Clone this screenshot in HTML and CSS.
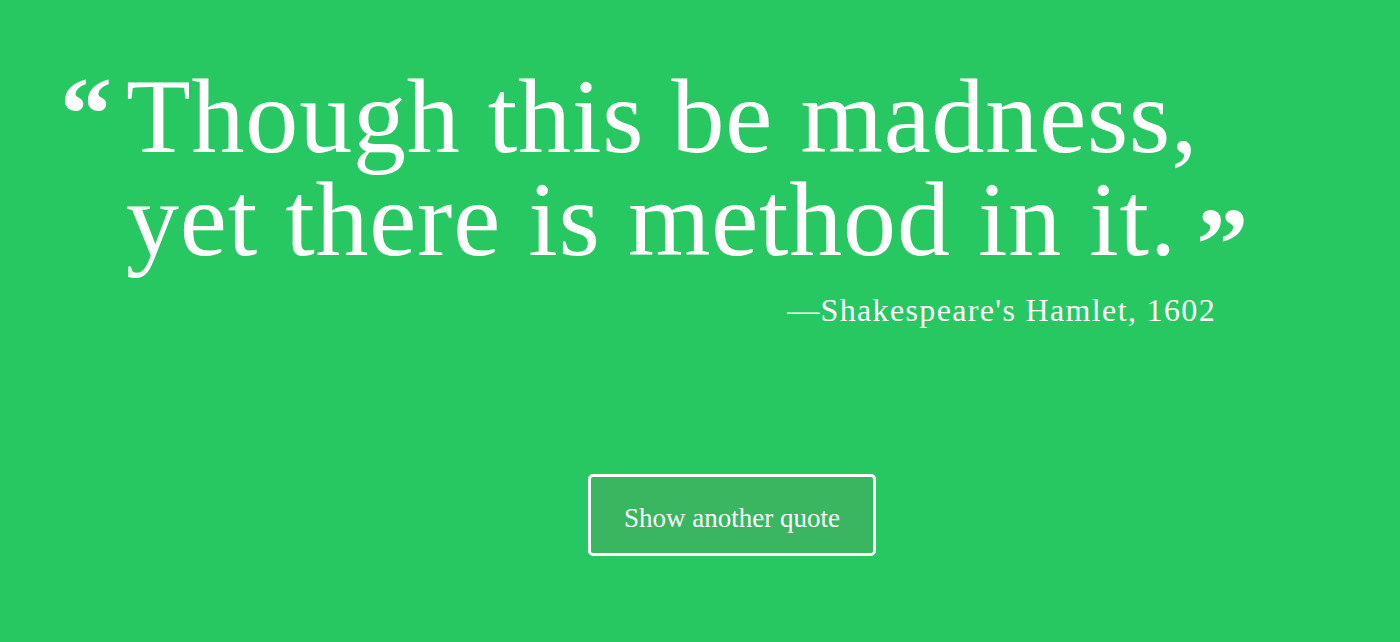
FILE: index.html
```html
<!DOCTYPE html>
<html lang="en">
<head>
<meta charset="utf-8">
<title>Random Quote</title>
<link rel="stylesheet" href="styles.css">
</head>
<body>
<main class="page">
  <section class="quote">
    <div class="quote-row">
      <span class="mark mark-open">“</span>
      <blockquote class="quote-text">Though this be madness, yet there is method in it.<span class="mark mark-close">”</span></blockquote>
    </div>
    <p class="cite">—Shakespeare's Hamlet, 1602</p>
  </section>
  <div class="actions">
    <button class="btn" type="button">Show another quote</button>
  </div>
</main>
</body>
</html>
```

FILE: styles.css
```css
html, body {
  margin: 0;
  padding: 0;
}
body {
  background: #27c862;
  color: #ffffff;
  font-family: "Liberation Serif", "Times New Roman", serif;
  height: 642px;
  overflow: hidden;
}
.page {
  display: flex;
  flex-direction: column;
  padding-top: 65px;
}
.quote-row {
  display: flex;
  align-items: flex-start;
}
.mark {
  font-family: "Liberation Serif", serif;
  font-weight: bold;
  line-height: 1;
}
.mark-open {
  font-size: 104px;
  width: 66px;
  margin-left: 60px;
  margin-top: -3px;
  height: 60px;
}
.mark-close {
  font-size: 104px;
  margin-left: 19px;
  vertical-align: -24px;
  line-height: 0;
  letter-spacing: 0;
}
.quote-text {
  margin: 0;
  width: 1200px;
  font-size: 106px;
  line-height: 103px;
  font-weight: normal;
  letter-spacing: 0.8px;
}
.cite {
  margin: 19px 0 0;
  text-align: right;
  padding-right: 184px;
  font-size: 32px;
  line-height: 40px;
  letter-spacing: 1.35px;
}
.actions {
  display: flex;
  justify-content: center;
  padding-left: 64px;
  margin-top: 144px;
}
.btn {
  background: #3ab660;
  color: #ffffff;
  border: 3px solid #ffffff;
  border-radius: 5px;
  width: 288px;
  height: 82px;
  padding: 7px 0 0;
  font-family: "Liberation Serif", serif;
  font-size: 27px;
  cursor: pointer;
}
```
